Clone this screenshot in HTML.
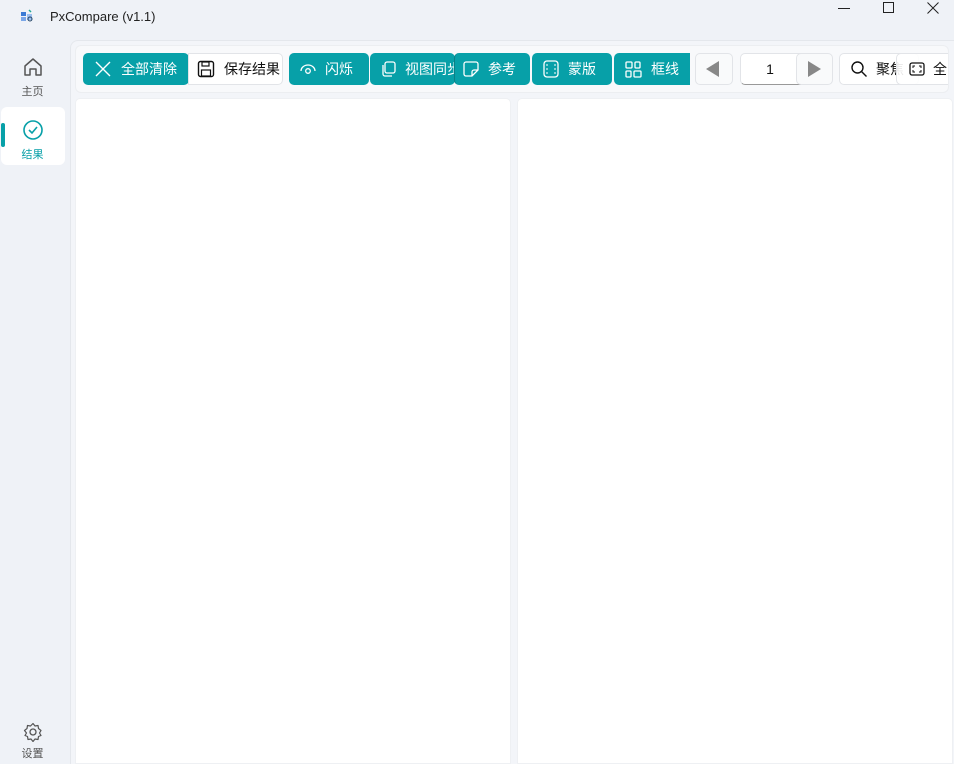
<!DOCTYPE html>
<html><head><meta charset="utf-8"><style>
*{box-sizing:border-box;margin:0;padding:0}
body{width:954px;height:764px;background:#eff2f7;font-family:"Liberation Sans","Noto Sans CJK SC",sans-serif;position:relative;overflow:hidden;color:#222}
.title{position:absolute;left:50px;top:9px;font-size:13px;color:#222}
.logo{position:absolute;left:20px;top:9px;width:14px;height:14px}
.wc{position:absolute;top:0;font-size:14px;color:#222}
.content{position:absolute;left:70px;top:40px;right:0;bottom:0;background:#f3f5f9;border-left:1px solid #e4e7ec;border-top:1px solid #e4e7ec;border-top-left-radius:8px}
.tb{position:absolute;left:75px;top:45px;width:874px;height:48px;background:#f8f9fb;border:1px solid #eceef1;border-radius:6px;overflow:hidden}
.btn{position:absolute;top:7px;height:32px;border-radius:5px;background:#07a0a8;color:#fff;font-size:14px;display:flex;align-items:center;white-space:nowrap;overflow:hidden}
.btn svg{margin:0 9px 0 11px;flex:none}
.wbtn{background:#fff;color:#111;border:1px solid #e2e4e8}
.panel{position:absolute;top:98px;bottom:0;background:#fff;border:1px solid #eef0f3;border-radius:5px 5px 0 0}
.nav{position:absolute;left:0;width:65px;text-align:center;font-size:11px;color:#555}
</style></head><body>
<svg class="logo" viewBox="0 0 14 14"><rect x="1" y="3" width="5" height="4" fill="#3a7bd5"/><rect x="1" y="8" width="5" height="4" fill="#7aa7e8"/><rect x="7" y="5" width="5" height="6" fill="#9cc0ef"/><path d="M9 1l2 2" stroke="#2a9" stroke-width="1.5"/><circle cx="10" cy="10" r="2" fill="none" stroke="#246" stroke-width="1"/></svg>
<div class="title">PxCompare (v1.1)</div>
<svg class="wc" style="left:838px;top:2px" width="12" height="12"><path d="M0 6.5h12" stroke="#222"/></svg>
<svg class="wc" style="left:883px;top:2px" width="12" height="12"><rect x="0.5" y="0.5" width="10" height="10" fill="none" stroke="#222"/></svg>
<svg class="wc" style="left:927px;top:2px" width="12" height="12"><path d="M0.5 0.5l11 11M11.5 0.5l-11 11" stroke="#222"/></svg>

<div class="nav" style="top:56px"><svg width="22" height="22" viewBox="0 0 22 22"><path d="M3 10L11 3l8 7v9h-5v-6H8v6H3z" fill="none" stroke="#555" stroke-width="1.5" stroke-linejoin="round"/></svg><div style="margin-top:2px">主页</div></div>
<div style="position:absolute;left:1px;top:107px;width:64px;height:58px;background:#fff;border-radius:6px"></div>
<div style="position:absolute;left:1px;top:123px;width:4px;height:24px;background:#07a0a8;border-radius:2px"></div>
<div class="nav" style="top:119px;color:#07a0a8"><svg width="22" height="22" viewBox="0 0 22 22"><circle cx="11" cy="11" r="9" fill="none" stroke="#07a0a8" stroke-width="1.6"/><path d="M7 11l3 3 5-6" fill="none" stroke="#07a0a8" stroke-width="1.6"/></svg><div style="margin-top:2px">结果</div></div>
<div class="nav" style="top:722px"><svg width="20" height="20" viewBox="0 0 20 20"><circle cx="10" cy="10" r="3" fill="none" stroke="#555" stroke-width="1.3"/><path d="M10 1.5l2 2.5 3-.5 .5 3 2.5 2-1.5 2.5 1.5 2.5-2.5 1-.5 3-3-.5-2 2.5-2-2.5-3 .5-.5-3-2.5-1 1.5-2.5L1.5 8.5l2.5-2 .5-3 3 .5z" fill="none" stroke="#555" stroke-width="1.2" stroke-linejoin="round"/></svg><div>设置</div></div>

<div class="content"></div>
<div class="tb">
<div class="btn" style="left:7px;width:106px"><svg width="18" height="18"><path d="M2 2l14 14M16 2L2 16" stroke="#fff" stroke-width="1.4"/></svg>全部清除</div>
<div class="btn wbtn" style="left:112px;width:95px;border-radius:0 5px 5px 0"><svg width="18" height="18" style="margin-left:8px"><rect x="1.5" y="1.5" width="15" height="15" rx="2" fill="none" stroke="#111" stroke-width="1.4"/><rect x="5" y="2" width="7" height="4" fill="none" stroke="#111" stroke-width="1.2"/><rect x="4.5" y="10" width="9" height="6" fill="none" stroke="#111" stroke-width="1.2"/></svg>保存结果</div>
<div class="btn" style="left:213px;width:80px"><svg width="16" height="12"><path d="M1 8a7 6 0 0 1 14 0" fill="none" stroke="#fff" stroke-width="1.3"/><circle cx="8" cy="8" r="2.3" fill="none" stroke="#fff" stroke-width="1.3"/></svg>闪烁</div>
<div class="btn" style="left:294px;width:85px"><svg width="16" height="16" style="margin-left:10px"><rect x="5" y="1" width="10" height="11" rx="2" fill="none" stroke="#fff" stroke-width="1.3"/><path d="M3 4v9a2 2 0 0 0 2 2h7" fill="none" stroke="#fff" stroke-width="1.3"/></svg>视图同步</div>
<div class="btn" style="left:378px;width:76px;border-left:1px solid #0b7f86"><svg width="16" height="16" style="margin-left:8px"><path d="M3 1h10a2 2 0 0 1 2 2v6l-6 6H3a2 2 0 0 1-2-2V3a2 2 0 0 1 2-2zM15 9h-4a2 2 0 0 0-2 2v4" fill="none" stroke="#fff" stroke-width="1.3"/></svg>参考</div>
<div class="btn" style="left:456px;width:80px"><svg width="16" height="18"><rect x="1" y="1" width="14" height="16" rx="3" fill="none" stroke="#fff" stroke-width="1.3"/><path d="M4 4v10M12 4v10" stroke="#fff" stroke-dasharray="2 2"/></svg>蒙版</div>
<div class="btn" style="left:538px;width:76px;border-radius:5px 0 0 5px"><svg width="17" height="17"><rect x="1" y="1" width="6" height="6" rx="1" fill="none" stroke="#fff" stroke-width="1.3"/><rect x="10" y="1" width="5" height="6" rx="1" fill="none" stroke="#fff" stroke-width="1.3"/><rect x="1" y="10" width="5" height="6" rx="1" fill="none" stroke="#fff" stroke-width="1.3"/><rect x="9" y="10" width="7" height="6" rx="1" fill="none" stroke="#fff" stroke-width="1.3"/></svg>框线</div>
<div class="btn wbtn" style="left:619px;width:38px;background:#f9fafb"><svg width="14" height="16" style="margin-left:10px"><path d="M13 0v16L0 8z" fill="#888"/></svg></div>
<div class="btn wbtn" style="left:664px;width:78px;justify-content:center;padding-right:18px;border-bottom:1px solid #999">1</div>
<div class="btn wbtn" style="left:720px;width:37px;background:#f9fafb;border-radius:5px"><svg width="14" height="16" style="margin-left:10px"><path d="M1 0v16L14 8z" fill="#888"/></svg></div>
<div class="btn wbtn" style="left:763px;width:80px"><svg width="18" height="18" style="margin-left:10px;margin-right:8px"><circle cx="7.5" cy="7.5" r="5.5" fill="none" stroke="#111" stroke-width="1.4"/><path d="M11.5 11.5l5 5" stroke="#111" stroke-width="1.4"/></svg>聚焦</div>
<div class="btn wbtn" style="left:820px;width:60px;background:rgba(255,255,255,.9)"><svg width="16" height="14" style="margin-left:12px;margin-right:8px"><rect x="1" y="1" width="14" height="12" rx="2" fill="none" stroke="#111" stroke-width="1.3"/><path d="M4 6V4h2M10 4h2v2M12 8v2h-2M6 10H4V8" fill="none" stroke="#111"/></svg>全</div>
</div>
<div class="panel" style="left:75px;width:436px"></div>
<div class="panel" style="left:517px;width:436px"></div>
</body></html>
